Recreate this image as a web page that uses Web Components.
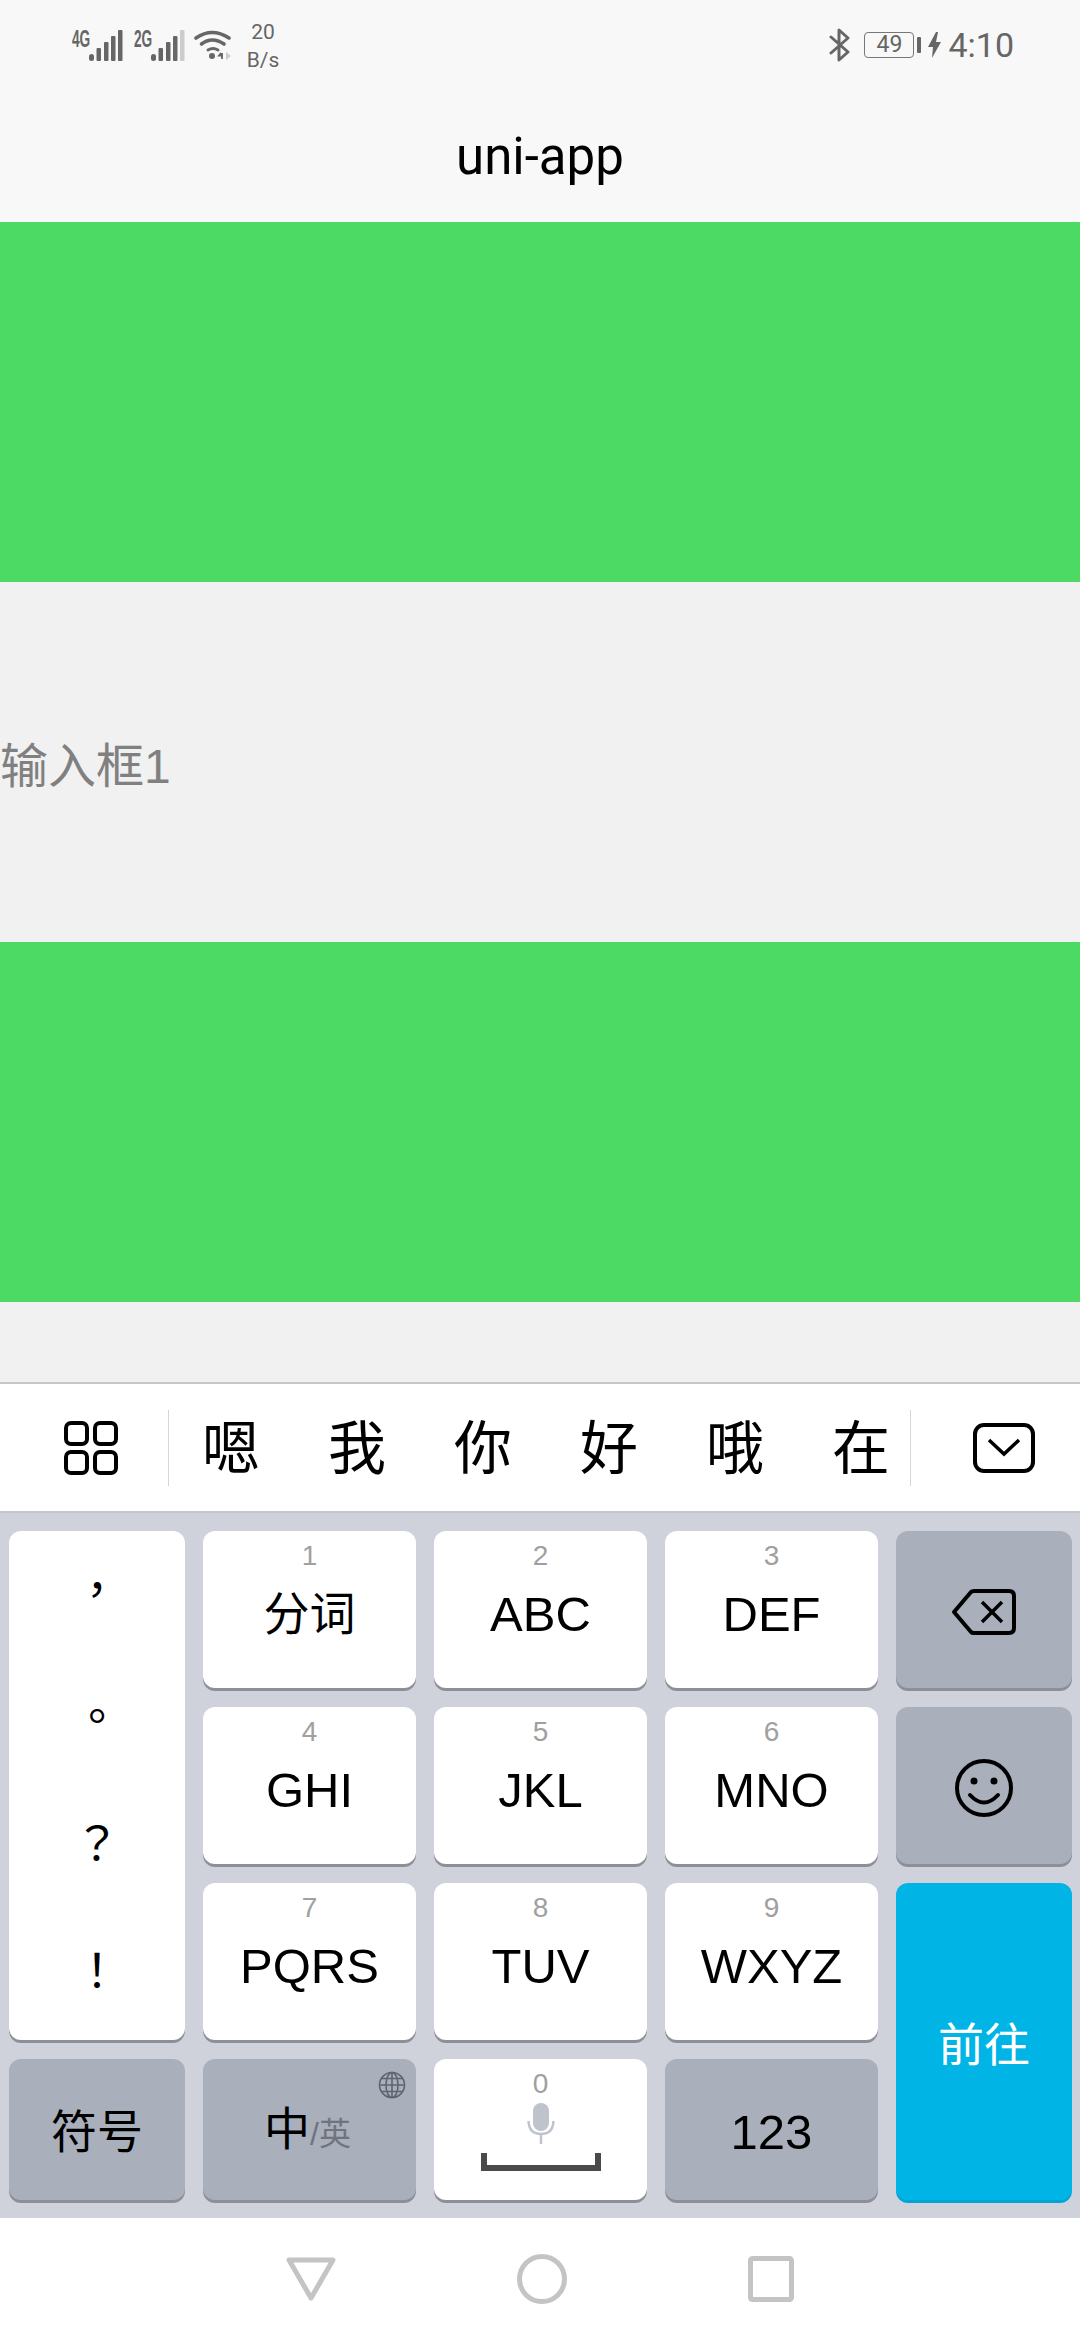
<!DOCTYPE html>
<html lang="zh">
<head>
<meta charset="utf-8">
<title>uni-app</title>
<style>
    html, body { margin: 0; padding: 0; }
    body {
        width: 1080px;
        height: 2340px;
        display: flex;
        flex-direction: column;
        overflow: hidden;
        background: #f1f1f1;
        font-family: "Liberation Sans", "Noto Sans CJK SC", sans-serif;
    }
</style>
</head>
<body>
<app-header></app-header>
<page-body>
    <green-band></green-band>
    <input-band placeholder="输入框1"></input-band>
    <green-band></green-band>
</page-body>
<candidate-bar></candidate-bar>
<ime-keyboard></ime-keyboard>
<nav-bar></nav-bar>

<script>
function define(name, css, html) {
    customElements.define(name, class extends HTMLElement {
        constructor() {
            super();
            this.attachShadow({ mode: 'open' });
            const markup = typeof html === 'function' ? html(this) : html;
            this.shadowRoot.innerHTML = `<style>${css}</style>${markup}`;
        }
    });
}

const signalBars = (lastColor) => `
    <svg width="34" height="32" viewBox="0 0 34 32">
        <rect x="0" y="25" width="5" height="7" rx="2.5" fill="#666"/>
        <rect x="7.5" y="19" width="4.5" height="13" rx="1" fill="#666"/>
        <rect x="15" y="13" width="4.5" height="19" rx="1" fill="#666"/>
        <rect x="22" y="7" width="4.5" height="25" rx="1" fill="#666"/>
        <rect x="29" y="1" width="4.5" height="31" rx="1" fill="${lastColor}"/>
    </svg>`;

define('signal-icon', `
    :host { display: flex; align-items: flex-start; height: 32px; }
    span {
        width: 17px;
        font: bold 24px/19px "Liberation Sans", sans-serif;
        color: #666;
        transform: scaleX(.57);
        transform-origin: left top;
        white-space: nowrap;
    }
`, (el) => `<span>${el.getAttribute('label')}</span>${signalBars(el.getAttribute('last') || '#666')}`);

define('status-bar', `
    :host {
        display: flex;
        align-items: center;
        height: 90px;
        padding: 0 66px 0 72px;
        color: #666;
        font-family: Roboto, "Liberation Sans", sans-serif;
        box-sizing: border-box;
    }
    .left, .right { display: flex; align-items: center; }
    .right { margin-left: auto; }
    signal-icon + signal-icon { margin-left: 11px; }
    .wifi { margin-left: 9px; }
    .speed {
        width: 34px;
        margin-left: 14px;
        padding-top: 2px;
        font-size: 21px;
        line-height: 28px;
        text-align: center;
    }
    .battery {
        width: 50px;
        height: 26px;
        margin-left: 13px;
        border: 1.5px solid #777;
        border-radius: 4px;
        box-sizing: border-box;
        font-size: 23px;
        line-height: 23px;
        text-align: center;
    }
    .nub { width: 4px; height: 16px; margin-left: 3px; background: #666; border-radius: 1px; }
    .bolt { margin-left: 7px; }
    .time { margin-left: 7px; font-size: 34px; line-height: 40px; }
`, `
    <div class="left">
        <signal-icon label="4G"></signal-icon>
        <signal-icon label="2G" last="#ccc"></signal-icon>
        <svg class="wifi" width="38" height="32" viewBox="0 0 38 32" fill="none" stroke="#666" stroke-width="3.6" stroke-linecap="round">
            <path d="M2 9 Q18 -2 35 9"/>
            <path d="M7.5 15 Q18 7 30 15"/>
            <path d="M14 21 Q19 18 24 21" stroke-width="3"/>
            <circle cx="18" cy="27" r="3" fill="#666" stroke="none"/>
            <path d="M27 24 L25 26.5 H29 M28 24 V30" stroke-width="1.8" stroke-linecap="butt"/>
            <path d="M32 23 L37 27 L32 31 Z" fill="#ccc" stroke="none"/>
        </svg>
        <div class="speed">20<br>B/s</div>
    </div>
    <div class="right">
        <svg width="22" height="34" viewBox="0 0 22 34" fill="none" stroke="#666" stroke-width="3" stroke-linejoin="round" stroke-linecap="round">
            <path d="M2 9 L19 24 L10 32 V2 L19 10 L2 25"/>
        </svg>
        <div class="battery">49</div>
        <div class="nub"></div>
        <svg class="bolt" width="13" height="26" viewBox="0 0 13 26"><path d="M8 0 L0 15 H5 L4 26 L13 10 H8 L10 0 Z" fill="#666"/></svg>
        <div class="time">4:10</div>
    </div>
`);

define('app-header', `
    :host { display: block; flex: none; height: 222px; background: #f8f8f8; }
    .title {
        height: 132px;
        display: flex;
        align-items: center;
        justify-content: center;
        font: 51px Roboto, "Liberation Sans", sans-serif;
        color: #000;
    }
`, `<status-bar></status-bar><div class="title">uni-app</div>`);

define('page-body', `
    :host { display: block; flex: 1; min-height: 0; overflow: hidden; }
`, `<slot></slot>`);

define('green-band', `:host { display: block; height: 360px; background: #4cd964; }`, ``);

define('input-band', `
    :host {
        display: flex;
        align-items: center;
        height: 360px;
        font: 48px "Liberation Sans", "Noto Sans CJK SC", sans-serif;
        color: #808080;
    }
`, (el) => `<span>${el.getAttribute('placeholder')}</span>`);

define('candidate-bar', `
    :host {
        display: flex;
        flex: none;
        align-items: center;
        height: 131px;
        background: #fff;
        border-top: 2px solid #c6c6c6;
        border-bottom: 2px solid #c4c5cc;
        box-sizing: border-box;
    }
    .tool { display: flex; align-items: center; justify-content: center; box-sizing: border-box; }
    .tool.grid { width: 168px; padding-left: 14px; }
    .tool.close { flex: 1; padding-left: 16px; }
    .sep { width: 1px; height: 76px; background: #d6d6d6; }
    .list {
        width: 741px;
        box-sizing: border-box;
        padding: 0 0 7px 33px;
        display: flex;
        gap: 68px;
        font: 58px "Noto Sans CJK SC", sans-serif;
        color: #000;
    }
    .list span { width: 58px; flex: none; }
`, `
    <div class="tool grid">
        <svg width="54" height="54" viewBox="0 0 54 54" fill="none" stroke="#000" stroke-width="4">
            <rect x="2" y="2" width="21" height="21" rx="5"/>
            <rect x="31" y="2" width="21" height="21" rx="5"/>
            <rect x="2" y="31" width="21" height="21" rx="5"/>
            <rect x="31" y="31" width="21" height="21" rx="5"/>
        </svg>
    </div>
    <div class="sep"></div>
    <div class="list"><span>嗯</span><span>我</span><span>你</span><span>好</span><span>哦</span><span>在</span></div>
    <div class="sep"></div>
    <div class="tool close">
        <svg width="62" height="50" viewBox="0 0 62 50" fill="none" stroke="#000" stroke-width="4">
            <rect x="2" y="2" width="58" height="46" rx="9"/>
            <path d="M16 17 L31 31 L46 17" stroke-width="3.5"/>
        </svg>
    </div>
`);

// one keyboard key; the sub attribute is the small digit above the label
define('kb-key', `
    :host {
        display: flex;
        flex-direction: column;
        align-items: center;
        justify-content: center;
        position: relative;
        border-radius: 12px;
        background: #fff;
        box-shadow: 0 3px 0 #8d8e97;
        color: #000;
        font-size: 46px;
        line-height: 56px;
    }
    :host([kind="gray"]) { background: #a9afbb; }
    :host([kind="gray"]) .label { padding-top: 4px; }
    :host([kind="go"]) { background: #00b4e6; box-shadow: 0 3px 0 #00a5d4; color: #fff; }
    :host([kind="go"]) .label { padding-top: 6px; }
    .sub {
        position: absolute;
        top: 9px;
        left: 0;
        right: 0;
        text-align: center;
        font-size: 28px;
        line-height: 32px;
        color: #a0a0a0;
    }
    :host([sub]) .label { padding-top: 9px; }
    :host([latin]) { font-size: 49px; }
`, (el) => {
    const sub = el.getAttribute('sub');
    return `${sub ? `<div class="sub">${sub}</div>` : ''}<div class="label"><slot></slot></div>`;
});

define('punct-key', `
    :host {
        display: flex;
        flex-direction: column;
        grid-row: span 3;
        border-radius: 12px;
        background: #fff;
        box-shadow: 0 3px 0 #8d8e97;
        text-align: center;
        font: 46px/127px "Noto Sans CJK TC", sans-serif;
        color: #000;
    }
    span:first-of-type { margin-top: -8px; }
`, `<span>，</span><span>。</span><span>？</span><span>！</span>`);

define('ime-keyboard', `
    :host {
        display: grid;
        flex: none;
        grid-template-columns: 176px 213px 213px 213px 176px;
        grid-template-rows: 157px 157px 157px 141px;
        column-gap: 18px;
        row-gap: 19px;
        height: 705px;
        padding: 18px 8px 0 9px;
        box-sizing: border-box;
        background: #cfd1db;
        font-family: "Liberation Sans", "Noto Sans CJK SC", sans-serif;
    }
    .go { grid-row: span 2; }
    .small { font-size: 32px; color: #6f7580; }
    .globe { position: absolute; top: 12px; right: 10px; }
    .mic { position: absolute; top: 44px; left: 50%; margin-left: -14px; }
    .bar { position: absolute; top: 94px; left: 47px; }
    .lang { display: flex; align-items: baseline; padding-right: 4px; }
`, `
    <punct-key></punct-key>
    <kb-key sub="1">分词</kb-key>
    <kb-key sub="2" latin>ABC</kb-key>
    <kb-key sub="3" latin>DEF</kb-key>
    <kb-key kind="gray">
        <svg width="66" height="48" viewBox="0 0 66 48" fill="none" stroke="#000" stroke-width="4" style="display:block">
            <path d="M3 24 L20 4 Q21 3 23 3 H58 Q63 3 63 8 V40 Q63 45 58 45 H23 Q21 45 20 44 Z" stroke-linejoin="round"/>
            <path d="M31 14 L51 34 M51 14 L31 34" stroke-width="3.5"/>
        </svg>
    </kb-key>
    <kb-key sub="4" latin>GHI</kb-key>
    <kb-key sub="5" latin>JKL</kb-key>
    <kb-key sub="6" latin>MNO</kb-key>
    <kb-key kind="gray">
        <svg width="60" height="60" viewBox="0 0 60 60" fill="none" stroke="#000" stroke-width="4" style="display:block">
            <circle cx="30" cy="30" r="27"/>
            <circle cx="20" cy="23" r="3.5" fill="#000" stroke="none"/>
            <circle cx="40" cy="23" r="3.5" fill="#000" stroke="none"/>
            <path d="M16 37 Q30 52 44 37" stroke-linecap="round"/>
        </svg>
    </kb-key>
    <kb-key sub="7" latin>PQRS</kb-key>
    <kb-key sub="8" latin>TUV</kb-key>
    <kb-key sub="9" latin>WXYZ</kb-key>
    <kb-key kind="go" class="go">前往</kb-key>
    <kb-key kind="gray">符号</kb-key>
    <kb-key kind="gray">
        <svg class="globe" width="28" height="28" viewBox="0 0 28 28" fill="none" stroke="#5f6570" stroke-width="1.6">
            <circle cx="14" cy="14" r="12.5"/>
            <ellipse cx="14" cy="14" rx="6" ry="12.5"/>
            <path d="M14 1.5 V26.5 M1.5 14 H26.5 M3.5 7.5 H24.5 M3.5 20.5 H24.5"/>
        </svg>
        <div class="lang"><span>中</span><span class="small">/英</span></div>
    </kb-key>
    <kb-key sub="0">
        <svg class="mic" width="28" height="42" viewBox="0 0 28 42" fill="none" stroke="#bfc3cb" stroke-width="2.5">
            <rect x="6" y="0" width="16" height="28" rx="8" fill="#bfc3cb" stroke="none"/>
            <path d="M1.5 18 Q2 31 14 31 Q26 31 26.5 18 M14 31 V41"/>
        </svg>
        <svg class="bar" width="120" height="20" viewBox="0 0 120 20" fill="none" stroke="#4a4a4a" stroke-width="6">
            <path d="M3 1 V15 H117 V1" stroke-linecap="round"/>
        </svg>
    </kb-key>
    <kb-key kind="gray" latin>123</kb-key>
`);

define('nav-bar', `
    :host {
        flex: none;
        height: 122px;
        display: flex;
        align-items: center;
        justify-content: center;
        gap: 181px;
        background: #fff;
    }
    svg { display: block; }
`, `
    <svg width="50" height="44" viewBox="0 0 50 44" fill="none" stroke="#c4c4c4" stroke-width="5" stroke-linejoin="round">
        <path d="M3 3 H47 L25 41 Z"/>
    </svg>
    <svg width="50" height="50" viewBox="0 0 50 50" fill="none" stroke="#c4c4c4" stroke-width="5">
        <circle cx="25" cy="25" r="22.5"/>
    </svg>
    <svg width="46" height="46" viewBox="0 0 46 46" fill="none" stroke="#c4c4c4" stroke-width="5" stroke-linejoin="round">
        <rect x="2.5" y="2.5" width="41" height="41" rx="2"/>
    </svg>
`);
</script>
</body>
</html>
